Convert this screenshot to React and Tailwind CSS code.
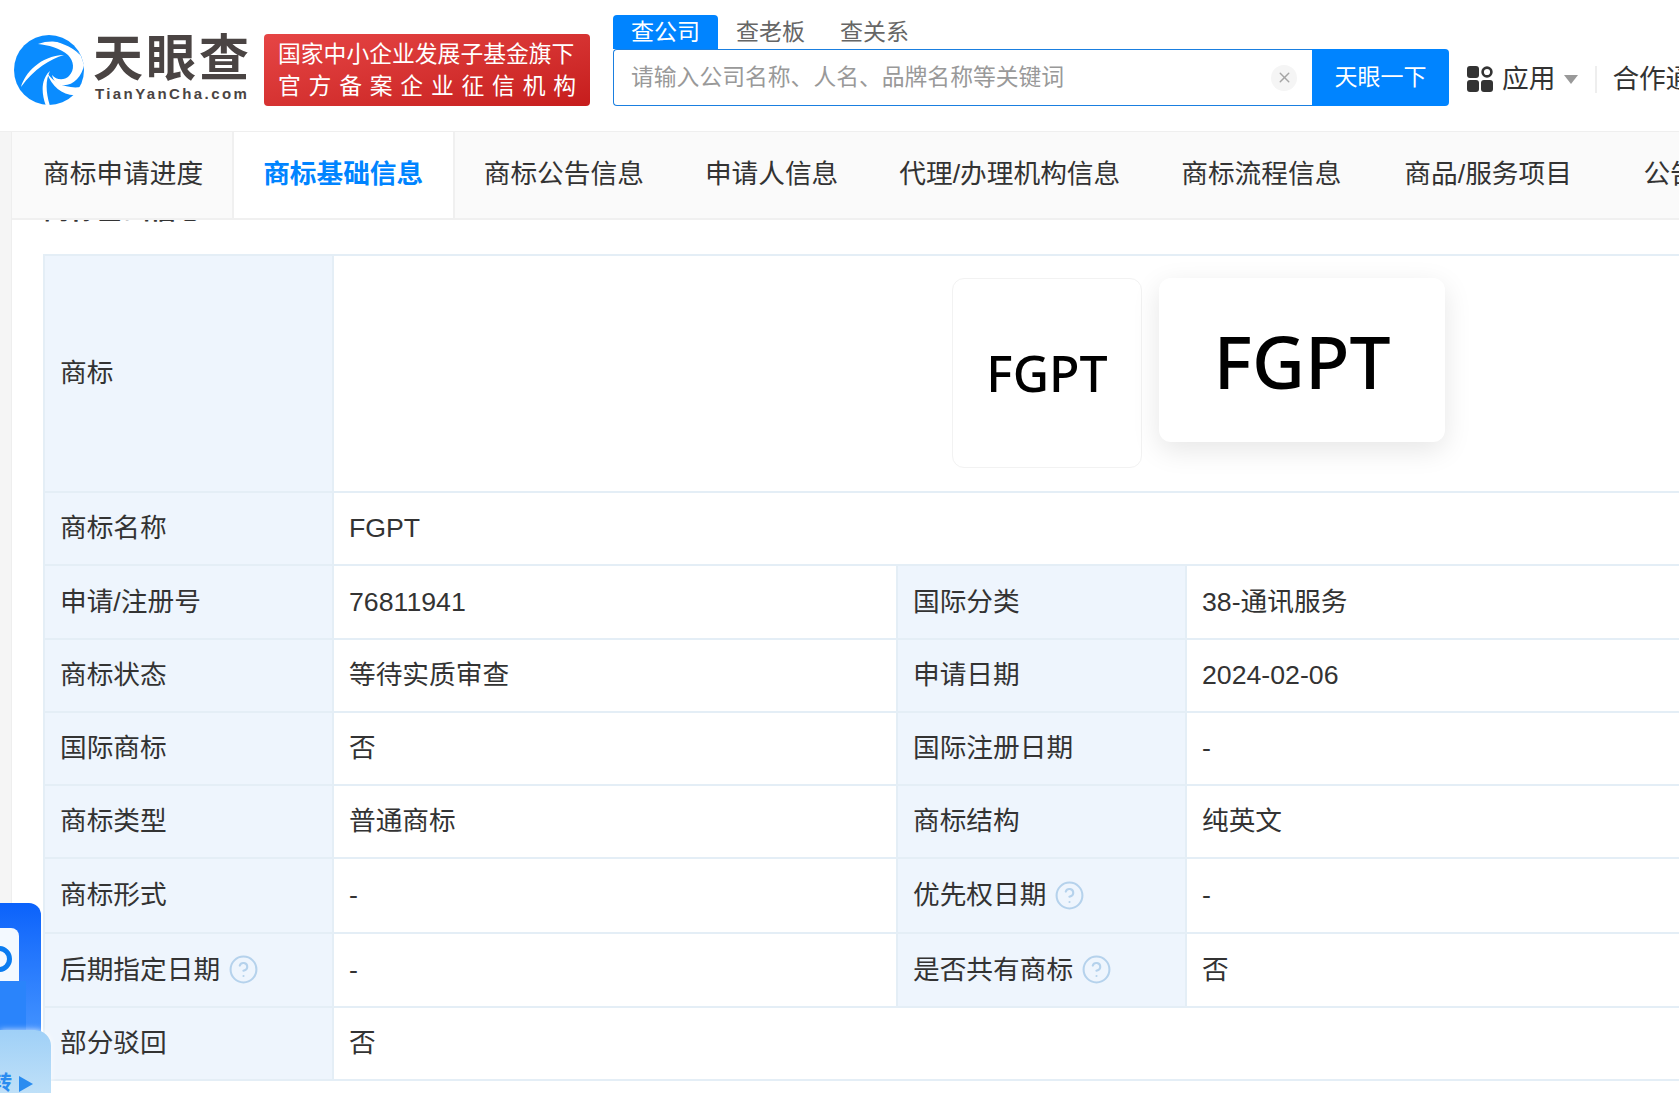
import { CircleHelp, X } from 'lucide-react';

const font = { fontFamily: '"Liberation Sans", "Noto Sans CJK SC", sans-serif' };

const navItems = [
  { t: '商标申请进度', c: 'pl-[31px] pr-[29px]' },
  { t: '商标基础信息', c: 'pl-[29px] pr-[30px] bg-white border-x-2 border-[#f0f0f0] font-bold text-[#0084ff]' },
  { t: '商标公告信息', c: 'pl-[28.5px] pr-[30.5px]' },
  { t: '申请人信息', c: 'px-[30.5px]' },
  { t: '代理/办理机构信息', c: 'px-[30.5px]' },
  { t: '商标流程信息', c: 'pl-[30.5px] pr-[32.5px]' },
  { t: '商品/服务项目', c: 'pl-[30.5px] pr-[41px]' },
  { t: '公告信息', c: 'px-[30.5px]' },
];

const rows = [
  { h: 'h-[73px]', a: '商标名称', b: 'FGPT', wide: true },
  { h: 'h-[74px]', a: '申请/注册号', b: '76811941', c: '国际分类', d: '38-通讯服务' },
  { h: 'h-[73px]', a: '商标状态', b: '等待实质审查', c: '申请日期', d: '2024-02-06' },
  { h: 'h-[73px]', a: '国际商标', b: '否', c: '国际注册日期', d: '-' },
  { h: 'h-[73px]', a: '商标类型', b: '普通商标', c: '商标结构', d: '纯英文' },
  { h: 'h-[75px]', a: '商标形式', b: '-', c: '优先权日期', cHelp: true, d: '-' },
  { h: 'h-[74px]', a: '后期指定日期', aHelp: true, b: '-', c: '是否共有商标', cHelp: true, d: '否' },
  { h: 'h-[73px]', a: '部分驳回', b: '否', wide: true },
];

const Logo = () => (
  <svg viewBox="0 0 70 70" className="w-[70px] h-[70px] shrink-0">
    <circle cx="35" cy="35" r="35" fill="#0a8cff" />
    <path d="M24 9C40 3 59 8 67 21L70 30C68 42 58 52 47 50C42 49 39 45 38 40C42 45 50 46 55 41C61 35 60 26 54 20C46 13 34 10 24 9Z" fill="#fff" />
    <path d="M28 4C42 1 58 6 66 20C58 11 44 6 28 4Z" fill="#0a8cff" />
    <path d="M7 52C11 38 26 21 50 20C36 24 20 34 7 52Z" fill="#fff" />
    <path d="M32 71C27 58 27 44 36 36C31 46 32 58 36 71Z" fill="#fff" />
    <path d="M64 60C50 62 38 52 33 38C40 48 52 54 67 52Z" fill="#fff" />
  </svg>
);

const AppsIcon = () => (
  <svg viewBox="0 0 26 26" className="w-[26px] h-[26px]">
    <rect x="0" y="0" width="12" height="12" rx="3" fill="#333" />
    <circle cx="20" cy="6" r="4.4" fill="none" stroke="#333" strokeWidth="2.6" />
    <rect x="0" y="14" width="12" height="12" rx="3" fill="#333" />
    <rect x="14" y="14" width="12" height="12" rx="3" fill="#333" />
  </svg>
);

const Help = () => <CircleHelp className="w-[31px] h-[31px] ml-[8px] shrink-0" color="#b5d2ec" strokeWidth={1.6} />;

const Label = ({ text, help }) => (
  <td className="bg-[#eef5fd] border-2 border-[#e4eef6] pl-[15px]">
    <div className="flex items-center">
      {text}
      {help && <Help />}
    </div>
  </td>
);

const Value = ({ text, span }) => (
  <td colSpan={span} className="border-2 border-[#e4eef6] pl-[15px]">
    {text}
  </td>
);

const Header = () => (
  <div className="h-[132px] flex bg-white border-b border-[#efefef]">
    <div className="ml-[14px] mt-[35px] flex shrink-0">
      <Logo />
      <div className="ml-[9px] w-[156px]">
        <div className="h-[50px] text-[50px] leading-[48px] font-bold text-[#4a4443] tracking-[3px] whitespace-nowrap">天眼查</div>
        <div className="pl-[2px] text-[15px] leading-[18px] font-bold text-[#4a4443] tracking-[2.4px] whitespace-nowrap">TianYanCha.com</div>
      </div>
    </div>
    <div className="ml-[15px] mt-[34px] shrink-0 w-[326px] h-[72px] rounded bg-gradient-to-br from-[#e64545] to-[#c61c1c] text-white text-[22.8px] leading-[32px] px-[14px] py-[4px]">
      <div className="whitespace-nowrap">国家中小企业发展子基金旗下</div>
      <div className="flex justify-between">
        {'官方备案企业征信机构'.split('').map((c, i) => (
          <span key={i}>{c}</span>
        ))}
      </div>
    </div>
    <div className="ml-[23px] mt-[15px] shrink-0 w-[836px]">
      <div className="flex h-[34px] text-[23px] leading-[34px] text-[#666]">
        <div className="px-[18px] bg-[#0084ff] text-white rounded-t">查公司</div>
        <div className="pl-[18px] pr-[17px]">查老板</div>
        <div className="px-[18px]">查关系</div>
      </div>
      <div className="flex h-[57px]">
        <div className="flex-1 flex items-center border border-[#1a7fe0] border-r-0 rounded-l pl-[17px] pr-[15px] text-[22.8px] text-[#999]">
          <span className="flex-1">请输入公司名称、人名、品牌名称等关键词</span>
          <span className="w-[26px] h-[26px] rounded-full bg-[#f5f5f5] flex items-center justify-center">
            <X className="w-[17px] h-[17px]" color="#a5a5a5" strokeWidth={2} />
          </span>
        </div>
        <div className="w-[137px] bg-[#0084ff] text-white text-[23px] rounded-r flex items-center justify-center">天眼一下</div>
      </div>
    </div>
    <div className="ml-[18px] mt-[65px] h-[28px] flex items-center text-[26.7px] text-[#333] whitespace-nowrap">
      <AppsIcon />
      <span className="ml-[9px]">应用</span>
      <span className="ml-[9px] w-0 h-0 border-x-[7px] border-x-transparent border-t-[9px] border-t-[#999]" />
      <span className="ml-[17px] w-[2px] h-[27px] bg-[#eee]" />
      <span className="ml-[15px]">合作通道</span>
    </div>
  </div>
);

const Nav = () => (
  <div className="h-[88px] ml-[12px] flex bg-[#fafafa] border-b-2 border-[#f0f0f0] text-[26.7px] leading-[84px] text-[#333] whitespace-nowrap">
    {navItems.map((n) => (
      <div key={n.t} className={n.c}>
        {n.t}
      </div>
    ))}
  </div>
);

const FloatWidget = () => (
  <div className="absolute left-0 bottom-0 w-[52px] h-[190px]">
    <div className="absolute left-0 top-0 w-[41px] h-[190px] rounded-tr-xl bg-gradient-to-b from-[#0a62fb] to-[#5aa6ff]">
      <div className="absolute left-0 top-[25px] w-[19px] h-[54px] bg-[#f3f9ff] rounded-tr-lg overflow-hidden">
        <div className="absolute left-[-14px] top-[18px] w-[26px] h-[26px] rounded-full border-[5px] border-[#0a7cf0]" />
      </div>
      <div className="absolute left-0 top-[78px] w-[26px] h-[60px] bg-[#2a84fb]" />
    </div>
    <div className="absolute left-0 bottom-0 w-[51px] h-[63px] rounded-tr-2xl bg-gradient-to-b from-[#9fd0f7] to-[#bfe0f8] shadow-[0_0_6px_rgba(255,255,255,0.8)] overflow-hidden">
      <span className="absolute left-[-8px] top-[38px] text-[20px] font-bold text-[#2a8cf0]">转</span>
      <span className="absolute left-[19px] top-[46px] w-0 h-0 border-y-[8px] border-y-transparent border-l-[14px] border-l-[#2a8cf0]" />
    </div>
  </div>
);

const App = () => (
  <div style={font} className="relative w-[1679px] h-[1093px] overflow-hidden bg-white">
    <Header />
    <div className="flex">
      <div className="w-[12px] h-[961px] bg-[#f5f5f5] border-r border-[#eeeeee] shrink-0" />
      <div className="flex-1 min-w-0">
        <div className="-ml-[12px]">
          <Nav />
        </div>
        <div className="h-[6px] overflow-hidden pl-[31px] bg-white">
          <div className="mt-[-23px] text-[26.7px] leading-[26px] font-bold text-[#333]">商标基础信息</div>
        </div>
        <table className="ml-[31px] mt-[28px] w-[2020px] table-fixed border-collapse text-[26.7px] text-[#333]">
          <colgroup>
            <col className="w-[289px]" />
            <col className="w-[564px]" />
            <col className="w-[289px]" />
            <col />
          </colgroup>
          <tbody>
            <tr className="h-[237px]">
              <Label text="商标" />
              <td colSpan={3} className="border-2 border-[#e4eef6]">
                <div className="flex justify-center items-start gap-[17px] ml-[2px] pb-[1px]">
                  <div className="w-[190px] h-[190px] rounded-xl border border-[#f2f2f2] flex items-center justify-center">
                    <span className="text-[50px] leading-[50px] font-medium text-black" style={{ fontFamily: '"Noto Sans", sans-serif' }}>FGPT</span>
                  </div>
                  <div className="w-[286px] h-[164px] rounded-xl bg-white shadow-[0_8px_28px_rgba(0,0,0,0.1)] flex items-center justify-center">
                    <span className="text-[73px] leading-[73px] font-medium text-black" style={{ fontFamily: '"Noto Sans", sans-serif' }}>FGPT</span>
                  </div>
                </div>
              </td>
            </tr>
            {rows.map((r) => (
              <tr key={r.a} className={r.h}>
                <Label text={r.a} help={r.aHelp} />
                {r.wide ? (
                  <Value text={r.b} span={3} />
                ) : (
                  <>
                    <Value text={r.b} />
                    <Label text={r.c} help={r.cHelp} />
                    <Value text={r.d} />
                  </>
                )}
              </tr>
            ))}
          </tbody>
        </table>
      </div>
    </div>
    <FloatWidget />
  </div>
);

export default App;
